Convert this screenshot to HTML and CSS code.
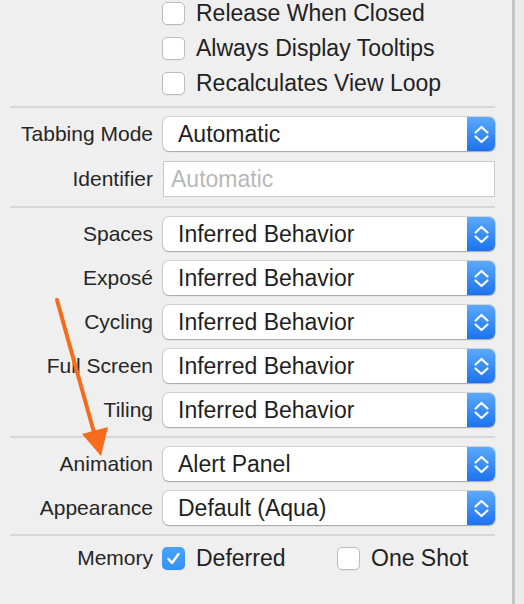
FILE: index.html
```html
<!DOCTYPE html>
<html>
<head>
<meta charset="utf-8">
<link rel="stylesheet" href="styles.css">
</head>
<body>
<div class="panel">
  <div class="section checks">
    <div class="ctl"><label class="check"><span class="box"></span><span>Release When Closed</span></label></div>
    <div class="ctl"><label class="check"><span class="box"></span><span>Always Display Tooltips</span></label></div>
    <div class="ctl"><label class="check"><span class="box"></span><span>Recalculates View Loop</span></label></div>
  </div>
  <div class="sep"></div>
  <div class="section">
    <span class="lbl">Tabbing Mode</span>
    <div class="popup"><span class="val">Automatic</span><span class="stepper"><svg width="28" height="34" viewBox="0 0 28 34"><polyline points="8.5,15.5 14.5,10 20.5,15.5"/><polyline points="8.5,19.5 14.5,25 20.5,19.5"/></svg></span></div>
    <span class="lbl">Identifier</span>
    <div class="field"><span class="ph">Automatic</span></div>
  </div>
  <div class="sep"></div>
  <div class="section">
    <span class="lbl">Spaces</span>
    <div class="popup"><span class="val">Inferred Behavior</span><span class="stepper"><svg width="28" height="34" viewBox="0 0 28 34"><polyline points="8.5,15.5 14.5,10 20.5,15.5"/><polyline points="8.5,19.5 14.5,25 20.5,19.5"/></svg></span></div>
    <span class="lbl">Exposé</span>
    <div class="popup"><span class="val">Inferred Behavior</span><span class="stepper"><svg width="28" height="34" viewBox="0 0 28 34"><polyline points="8.5,15.5 14.5,10 20.5,15.5"/><polyline points="8.5,19.5 14.5,25 20.5,19.5"/></svg></span></div>
    <span class="lbl">Cycling</span>
    <div class="popup"><span class="val">Inferred Behavior</span><span class="stepper"><svg width="28" height="34" viewBox="0 0 28 34"><polyline points="8.5,15.5 14.5,10 20.5,15.5"/><polyline points="8.5,19.5 14.5,25 20.5,19.5"/></svg></span></div>
    <span class="lbl">Full Screen</span>
    <div class="popup"><span class="val">Inferred Behavior</span><span class="stepper"><svg width="28" height="34" viewBox="0 0 28 34"><polyline points="8.5,15.5 14.5,10 20.5,15.5"/><polyline points="8.5,19.5 14.5,25 20.5,19.5"/></svg></span></div>
    <span class="lbl">Tiling</span>
    <div class="popup"><span class="val">Inferred Behavior</span><span class="stepper"><svg width="28" height="34" viewBox="0 0 28 34"><polyline points="8.5,15.5 14.5,10 20.5,15.5"/><polyline points="8.5,19.5 14.5,25 20.5,19.5"/></svg></span></div>
  </div>
  <div class="sep"></div>
  <div class="section">
    <span class="lbl">Animation</span>
    <div class="popup"><span class="val">Alert Panel</span><span class="stepper"><svg width="28" height="34" viewBox="0 0 28 34"><polyline points="8.5,15.5 14.5,10 20.5,15.5"/><polyline points="8.5,19.5 14.5,25 20.5,19.5"/></svg></span></div>
    <span class="lbl">Appearance</span>
    <div class="popup"><span class="val">Default (Aqua)</span><span class="stepper"><svg width="28" height="34" viewBox="0 0 28 34"><polyline points="8.5,15.5 14.5,10 20.5,15.5"/><polyline points="8.5,19.5 14.5,25 20.5,19.5"/></svg></span></div>
  </div>
  <div class="sep"></div>
  <div class="section memory">
    <span class="lbl">Memory</span>
    <div class="pair">
      <label class="check"><span class="box on"><svg width="23" height="23" viewBox="0 0 23 23"><polyline points="6.5,12 10,16 16.5,7"/></svg></span><span>Deferred</span></label>
      <label class="check"><span class="box"></span><span>One Shot</span></label>
    </div>
  </div>
</div>
<div class="divider"></div>
<div class="gutter"></div>
<svg class="arrow" width="524" height="604" viewBox="0 0 524 604">
  <line x1="57" y1="300" x2="95" y2="436" stroke="#f76b1c" stroke-width="4" stroke-linecap="round"/>
  <polygon points="82,434 108,427 101,456" fill="#f76b1c"/>
</svg>
</body>
</html>
```

FILE: styles.css
```css
html, body {
  margin: 0;
  padding: 0;
}
body {
  width: 524px;
  height: 604px;
  overflow: hidden;
  display: flex;
  background: #efefef;
  font-family: "Liberation Sans", Arial, sans-serif;
  color: #222;
  position: relative;
}
.panel {
  flex: 0 0 512px;
  box-sizing: border-box;
  padding: 0 17px 0 10px;
  display: flex;
  flex-direction: column;
}
.divider {
  flex: 0 0 3px;
  background: #c6c6c6;
}
.gutter {
  flex: 1;
  background: #ebebeb;
}
.section {
  display: grid;
  grid-template-columns: 143px 1fr;
  column-gap: 10px;
  row-gap: 10px;
  padding: 9px 0;
  align-items: center;
}
.section.checks {
  row-gap: 12px;
  padding: 2px 0 11px;
}
.section.memory {
  padding-top: 10px;
}
.checks .ctl {
  grid-column: 2;
}
.sep {
  height: 2px;
  background: #d7d7d7;
}
.lbl {
  font-size: 21px;
  text-align: right;
  white-space: nowrap;
  color: #262626;
}
.check {
  display: flex;
  align-items: center;
  gap: 11px;
  font-size: 23px;
  line-height: 23px;
  height: 23px;
  white-space: nowrap;
  margin-left: -1px;
}
.box {
  flex: 0 0 23px;
  width: 23px;
  height: 23px;
  box-sizing: border-box;
  border: 1px solid #bcbcbc;
  border-radius: 5px;
  background: #fff;
  box-shadow: 0 1px 0 rgba(0,0,0,0.04);
}
.box.on {
  border: none;
  background: linear-gradient(#4aa2fa, #3391f6);
}
.box svg {
  display: block;
}
.box.on polyline {
  fill: none;
  stroke: #fff;
  stroke-width: 2.4;
  stroke-linecap: round;
  stroke-linejoin: round;
}
.pair {
  display: grid;
  grid-template-columns: 175px auto;
  align-items: center;
}
.popup {
  height: 34px;
  display: flex;
  align-items: center;
  background: #fff;
  border-radius: 6px;
  box-shadow: 0 0 0 1px rgba(0,0,0,0.12), 0 1px 1.5px rgba(0,0,0,0.22);
  overflow: hidden;
}
.val {
  flex: 1;
  padding-left: 15px;
  font-size: 23px;
  white-space: nowrap;
  color: #1f1f1f;
}
.stepper {
  flex: 0 0 28px;
  height: 34px;
  background: linear-gradient(#5aaafb, #1d72ef);
}
.stepper svg {
  display: block;
}
.stepper polyline {
  fill: none;
  stroke: #fff;
  stroke-width: 2.2;
  stroke-linecap: round;
  stroke-linejoin: round;
}
.field {
  height: 36px;
  box-sizing: border-box;
  border: 1px solid #c9c9c9;
  background: #fff;
  display: flex;
  align-items: center;
  padding-left: 7px;
}
.ph {
  font-size: 23px;
  color: #b8b8b8;
  white-space: nowrap;
}
.arrow {
  position: absolute;
  left: 0;
  top: 0;
  pointer-events: none;
}
```
